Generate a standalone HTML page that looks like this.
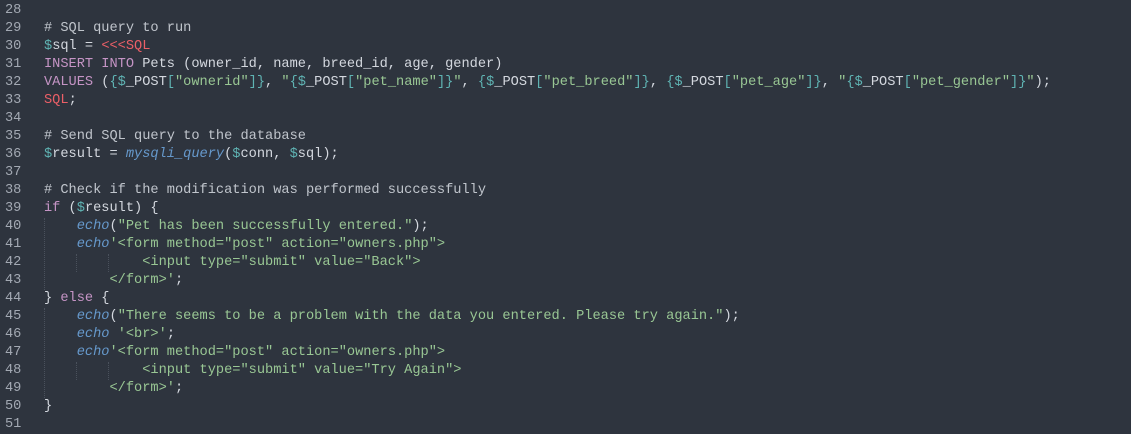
<!DOCTYPE html>
<html><head><style>
html,body{margin:0;padding:0;background:#2e343e;width:1131px;height:420px;overflow:hidden}
pre{margin:0;font-family:"Liberation Mono",monospace;font-size:13.65px;line-height:18px;color:#d4d8df;position:absolute;top:2px;left:0}
.n{color:#a3a9b3;display:inline-block;width:44px;padding-left:5px;box-sizing:border-box}
.c{color:#c0c5cc}.v{color:#5fb3b3}.k{color:#c594c5}.s{color:#99c794}.h{color:#ec5f67}.f{color:#6699cc;font-style:italic}
.g{position:absolute;width:0;border-left:1px dotted #4a515c}
</style></head><body>
<div class="g" style="left:44px;top:218px;height:72px"></div>
<div class="g" style="left:76px;top:254px;height:18px"></div>
<div class="g" style="left:108px;top:254px;height:18px"></div>
<div class="g" style="left:44px;top:308px;height:90px"></div>
<div class="g" style="left:76px;top:362px;height:18px"></div>
<div class="g" style="left:108px;top:362px;height:18px"></div>
<pre><span class="n">28</span>
<span class="n">29</span><span class="c"># SQL query to run</span>
<span class="n">30</span><span class="v">$</span>sql = <span class="h">&lt;&lt;&lt;SQL</span>
<span class="n">31</span><span class="k">INSERT INTO</span> Pets (owner_id, name, breed_id, age, gender)
<span class="n">32</span><span class="k">VALUES</span> (<span class="v">{$</span>_POST<span class="v">[</span><span class="s">"ownerid"</span><span class="v">]}</span>, <span class="s">"</span><span class="v">{$</span>_POST<span class="v">[</span><span class="s">"pet_name"</span><span class="v">]}</span><span class="s">"</span>, <span class="v">{$</span>_POST<span class="v">[</span><span class="s">"pet_breed"</span><span class="v">]}</span>, <span class="v">{$</span>_POST<span class="v">[</span><span class="s">"pet_age"</span><span class="v">]}</span>, <span class="s">"</span><span class="v">{$</span>_POST<span class="v">[</span><span class="s">"pet_gender"</span><span class="v">]}</span><span class="s">"</span>);
<span class="n">33</span><span class="h">SQL</span>;
<span class="n">34</span>
<span class="n">35</span><span class="c"># Send SQL query to the database</span>
<span class="n">36</span><span class="v">$</span>result = <span class="f">mysqli_query</span>(<span class="v">$</span>conn, <span class="v">$</span>sql);
<span class="n">37</span>
<span class="n">38</span><span class="c"># Check if the modification was performed successfully</span>
<span class="n">39</span><span class="k">if</span> (<span class="v">$</span>result) {
<span class="n">40</span>    <span class="f">echo</span>(<span class="s">"Pet has been successfully entered."</span>);
<span class="n">41</span>    <span class="f">echo</span><span class="s">'&lt;form method="post" action="owners.php"&gt;</span>
<span class="n">42</span><span class="s">            &lt;input type="submit" value="Back"&gt;</span>
<span class="n">43</span><span class="s">        &lt;/form&gt;'</span>;
<span class="n">44</span>} <span class="k">else</span> {
<span class="n">45</span>    <span class="f">echo</span>(<span class="s">"There seems to be a problem with the data you entered. Please try again."</span>);
<span class="n">46</span>    <span class="f">echo</span> <span class="s">'&lt;br&gt;'</span>;
<span class="n">47</span>    <span class="f">echo</span><span class="s">'&lt;form method="post" action="owners.php"&gt;</span>
<span class="n">48</span><span class="s">            &lt;input type="submit" value="Try Again"&gt;</span>
<span class="n">49</span><span class="s">        &lt;/form&gt;'</span>;
<span class="n">50</span>}
<span class="n">51</span></pre>
</body></html>
